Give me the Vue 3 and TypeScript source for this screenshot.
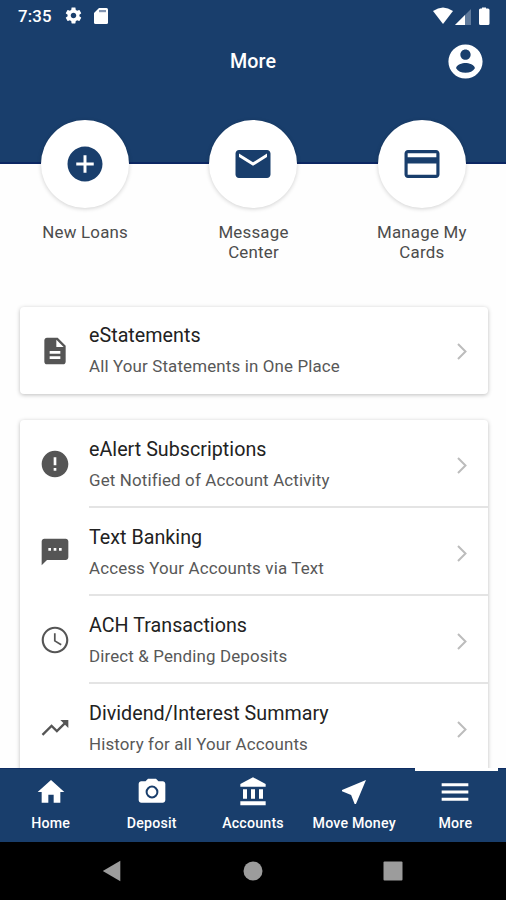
<script setup lang="ts">
interface Item {
  title: string
  sub: string
  icon: string
}
interface Link {
  label: string
  icon: string
}

const quick: Link[] = [
  { label: 'New Loans', icon: 'M12 2C6.48 2 2 6.48 2 12s4.48 10 10 10 10-4.48 10-10S17.52 2 12 2zm5 10.850h-4.150v4.150h-1.700v-4.150H7v-1.700h4.150V7h1.700v4.150h4.150v1.700z' },
  { label: 'Message Center', icon: 'M20 4H4c-1.1 0-1.99.9-1.99 2L2 18c0 1.1.9 2 2 2h16c1.1 0 2-.9 2-2V6c0-1.1-.9-2-2-2zm0 4l-8 5-8-5V6l8 5 8-5v2z' },
  { label: 'Manage My Cards', icon: 'M20 4H4c-1.11 0-1.99.89-1.99 2L2 18c0 1.11.89 2 2 2h16c1.11 0 2-.89 2-2V6c0-1.11-.89-2-2-2zm.2 14.200H3.800v-6.500h16.400v6.500zm0-10H3.800V5.800h16.400v2.400z' },
]

const groups: Item[][] = [
  [
    { title: 'eStatements', sub: 'All Your Statements in One Place', icon: 'M14 2H6c-1.1 0-1.990.9-1.990 2L4 20c0 1.100.890 2 1.990 2H18c1.100 0 2-.9 2-2V8l-6-6zm2 16H8v-2h8v2zm0-4H8v-2h8v2zm-3-5V3.500L18.500 9H13z' },
  ],
  [
    { title: 'eAlert Subscriptions', sub: 'Get Notified of Account Activity', icon: 'M12 2C6.480 2 2 6.480 2 12s4.480 10 10 10 10-4.480 10-10S17.520 2 12 2zm1 15h-2v-2h2v2zm0-4h-2V7h2v6z' },
    { title: 'Text Banking', sub: 'Access Your Accounts via Text', icon: 'M20 2H4c-1.100 0-1.990.9-1.990 2L2 22l4-4h14c1.100 0 2-.9 2-2V4c0-1.100-.9-2-2-2zM9 11H7V9h2v2zm4 0h-2V9h2v2zm4 0h-2V9h2v2z' },
    { title: 'ACH Transactions', sub: 'Direct & Pending Deposits', icon: 'M11.990 2C6.470 2 2 6.480 2 12s4.470 10 9.990 10C17.520 22 22 17.520 22 12S17.520 2 11.990 2zM12 20.400c-4.640 0-8.400-3.760-8.400-8.400s3.760-8.400 8.400-8.400 8.400 3.760 8.400 8.400-3.760 8.400-8.400 8.400zM12.500 7H11.200v6l5.100 3.100.7-1.130-4.500-2.670z' },
    { title: 'Dividend/Interest Summary', sub: 'History for all Your Accounts', icon: 'M16 6l2.290 2.290-4.880 4.880-4-4L2 16.590 3.200 17.800l6.210-6.200 4 4 6.100-6.100L22 12V6z' },
  ],
]

const tabs: Link[] = [
  { label: 'Home', icon: 'M10 20v-6h4v6h5v-8h3L12 3 2 12h3v8z' },
  { label: 'Deposit', icon: 'M9 2L7.170 4H4c-1.100 0-2 .9-2 2v12c0 1.100.9 2 2 2h16c1.100 0 2-.9 2-2V6c0-1.100-.9-2-2-2h-3.170L15 2zM12 7.200a4.800 4.800 0 1 1 0 9.600a4.800 4.800 0 1 1 0-9.600zM12 8.700a3.300 3.300 0 1 0 0 6.600a3.300 3.300 0 1 0 0-6.600z' },
  { label: 'Accounts', icon: 'M4.500 10v7h3v-7h-3zm6 0v7h3v-7h-3zM2.500 22h19v-3h-19v3zm14-12v7h3v-7h-3zM12 1L2.500 6v2h19V6L12 1z' },
  { label: 'Move Money', icon: 'M21 3L3 10.530v.980l6.840 2.650L12.480 21h.980L21 3z' },
  { label: 'More', icon: 'M2 5.500h20v2.200H2zM2 10.900h20v2.200H2zM2 16.300h20v2.200H2z' },
]
const active = 'More'
</script>

<template>
  <div class="screen">
    <header class="header">
      <div class="status">
        <span class="time">7:35</span>
        <svg class="gear" viewBox="0 0 24 24"><path d="M19.430 12.980c.040-.320.070-.640.070-.980s-.030-.660-.070-.980l2.110-1.650c.190-.150.240-.420.120-.640l-2-3.460c-.120-.220-.390-.300-.610-.220l-2.490 1c-.520-.400-1.080-.730-1.690-.980l-.380-2.650C14.460 2.180 14.250 2 14 2h-4c-.250 0-.460.180-.490.420l-.380 2.650c-.610.250-1.170.590-1.690.980l-2.490-1c-.230-.090-.490 0-.610.220l-2 3.460c-.130.220-.070.490.120.640l2.110 1.650c-.040.320-.070.650-.070.980s.030.660.070.980l-2.110 1.650c-.190.150-.240.420-.120.640l2 3.460c.120.220.390.300.610.220l2.490-1c.520.400 1.080.730 1.690.980l.380 2.650c.030.240.240.420.490.420h4c.250 0 .460-.180.490-.420l.380-2.650c.610-.250 1.170-.590 1.690-.980l2.490 1c.230.090.490 0 .610-.220l2-3.460c.120-.220.070-.490-.120-.640l-2.110-1.650zM12 15.500c-1.930 0-3.500-1.570-3.500-3.500s1.570-3.500 3.500-3.500 3.500 1.570 3.500 3.500-1.570 3.500-3.500 3.500z" /></svg>
        <svg class="sd" viewBox="0 0 14 16"><path d="M5 0h7.500Q14 0 14 1.500v13q0 1.500-1.500 1.500h-11Q0 16 0 14.500V5z" /><path class="notch" d="M5 2h7v2.200H5z" /></svg>
        <svg class="signals" viewBox="0 0 58 18">
          <path d="M0 4Q10 -3 20 4L10 17z" />
          <path class="dim" d="M38 2v16H22z" />
          <path d="M32 8v10H22z" />
          <path d="M49 1.500V.5h4v1h2Q56.500 1.500 56.500 3v13.500q0 1.500-1.500 1.500h-7.500q-1.500 0-1.500-1.500V3q0-1.500 1.500-1.500z" />
        </svg>
      </div>
      <div class="bar">
        <h1>More</h1>
        <svg class="account" viewBox="0 0 24 24"><path d="M12 2C6.480 2 2 6.480 2 12s4.480 10 10 10 10-4.480 10-10S17.520 2 12 2zm0 3c1.660 0 3 1.340 3 3s-1.340 3-3 3-3-1.340-3-3 1.340-3 3-3zm0 13.600c-2.500 0-4.400-.9-5.500-2.700.030-1.990 3.700-3.080 5.500-3.080 1.790 0 5.470 1.090 5.500 3.080-1.100 1.800-3 2.700-5.500 2.700z" /></svg>
      </div>
    </header>

    <main class="content">
      <div class="quick">
        <div v-for="q in quick" :key="q.label" class="action">
          <div class="disc"><svg viewBox="0 0 24 24"><path :d="q.icon" /></svg></div>
          <span>{{ q.label }}</span>
        </div>
      </div>

      <section v-for="(group, i) in groups" :key="i" class="card">
        <div v-for="item in group" :key="item.title" class="row">
          <svg class="lead" viewBox="0 0 24 24"><path fill-rule="evenodd" :d="item.icon" /></svg>
          <div class="body">
            <div class="text">
              <div class="title">{{ item.title }}</div>
              <div class="sub">{{ item.sub }}</div>
            </div>
            <svg class="chevron" viewBox="0 0 10 17"><path d="M1 1l7.500 7.500L1 16" /></svg>
          </div>
        </div>
      </section>
    </main>

    <nav class="tabs">
      <div v-for="t in tabs" :key="t.label" class="tab" :class="{ active: t.label === active }">
        <svg viewBox="0 0 24 24"><path fill-rule="evenodd" :d="t.icon" /></svg>
        <span>{{ t.label }}</span>
      </div>
    </nav>

    <div class="system">
      <svg viewBox="0 0 20 22"><path d="M.8 11L18.300.8v20.400z" /></svg>
      <svg viewBox="0 0 20 22"><circle cx="10" cy="11" r="9.500" /></svg>
      <svg viewBox="0 0 20 22"><rect x=".5" y="1.500" width="19" height="19" rx="1" /></svg>
    </div>
  </div>
</template>

<style>
body {
  margin: 0;
  overflow: hidden;
}
</style>

<style scoped>
.screen {
  display: flex;
  flex-direction: column;
  width: 506px;
  height: 900px;
  overflow: hidden;
  background: #fefefe;
  font-family: Roboto, "Liberation Sans", sans-serif;
}
svg {
  display: block;
  flex: none;
}
.header {
  flex: none;
  box-sizing: border-box;
  height: 164px;
  background: #193e6c;
  border-bottom: 2px solid #0c2763;
  color: #fff;
  fill: #fff;
}
.status {
  display: flex;
  align-items: center;
  height: 31px;
  padding: 0 15px 0 18px;
}
.time {
  width: 46px;
  font-size: 16.800px;
  font-weight: 500;
  letter-spacing: 0.200px;
}
.gear {
  width: 19px;
  height: 19px;
}
.sd {
  width: 14px;
  height: 16px;
  margin-left: 11px;
}
.notch {
  fill: #8496b2;
}
.signals {
  width: 58px;
  height: 18px;
  margin-left: auto;
}
.dim {
  fill: #5f7a9c;
}
.bar {
  display: grid;
  grid-template-columns: 1fr auto 1fr;
  align-items: center;
  height: 60px;
  padding: 0 20px;
}
h1 {
  grid-column: 2;
  margin: 0;
  font-size: 19.700px;
  font-weight: 500;
  letter-spacing: 0.100px;
}
.account {
  justify-self: end;
  width: 41px;
  height: 41px;
}
.content {
  flex: 1;
  min-height: 0;
  margin-top: -44px;
}
.quick {
  display: grid;
  grid-template-columns: repeat(3, 1fr);
  height: 187px;
  padding-left: 1px;
}
.action {
  display: flex;
  flex-direction: column;
  align-items: center;
}
.action span {
  width: 104px;
  margin-top: 14px;
  color: #4c4c4c;
  font-size: 16.900px;
  line-height: 20px;
  letter-spacing: 0.200px;
  text-align: center;
}
.disc {
  display: grid;
  place-items: center;
  width: 88px;
  height: 88px;
  border-radius: 50%;
  background: #fff;
  box-shadow: 0 1px 4px rgba(0, 0, 0, 0.180);
}
.disc svg {
  width: 42px;
  height: 42px;
  fill: #193e6c;
}
.card {
  margin: 0 18px 26px 20px;
  border-radius: 4px;
  background: #fff;
  box-shadow: 0 1px 4px rgba(0, 0, 0, 0.260);
}
.row {
  display: flex;
  align-items: center;
  height: 88px;
}
.card:nth-child(2) .row {
  height: 87px;
}
.lead {
  width: 32px;
  height: 32px;
  margin: 0 18px 0 19px;
  fill: #555;
}
.body {
  display: flex;
  flex: 1;
  align-items: center;
  justify-content: space-between;
  box-sizing: border-box;
  height: 100%;
  padding: 3px 21px 0 0;
  border-bottom: 2px solid #e4e4e4;
}
.row:last-child .body {
  border-bottom-color: transparent;
}
.title {
  color: #222;
  font-size: 19.700px;
  line-height: 30px;
  letter-spacing: 0.020px;
}
.sub {
  color: #585858;
  font-size: 16.900px;
  line-height: 30px;
  letter-spacing: 0.150px;
}
.chevron {
  width: 10px;
  height: 17px;
  margin-top: 1px;
  fill: none;
  stroke: #bcbcbc;
  stroke-width: 2;
}
.tabs {
  z-index: 1;
  display: grid;
  flex: none;
  grid-template-columns: repeat(5, 1fr);
  box-sizing: border-box;
  height: 74px;
  border-top: 1px solid #0f2d63;
  background: #193e6c;
  color: #fff;
}
.tab {
  position: relative;
  display: flex;
  flex-direction: column;
  align-items: center;
  padding-top: 7px;
}
.tab.active::before {
  position: absolute;
  top: -1px;
  left: 10px;
  width: 83px;
  height: 3px;
  background: #fff;
  content: "";
}
.tab svg {
  width: 32px;
  height: 32px;
  fill: #fff;
}
.tab span {
  margin-top: 6px;
  font-size: 14.200px;
  font-weight: 500;
  line-height: 18px;
  letter-spacing: 0.200px;
  white-space: nowrap;
}
.system {
  display: flex;
  flex: none;
  align-items: center;
  justify-content: space-between;
  box-sizing: border-box;
  height: 58px;
  padding: 0 103px 0 102px;
  background: #000;
}
.system svg {
  width: 20px;
  height: 22px;
  fill: #9c9c9c;
}
</style>
